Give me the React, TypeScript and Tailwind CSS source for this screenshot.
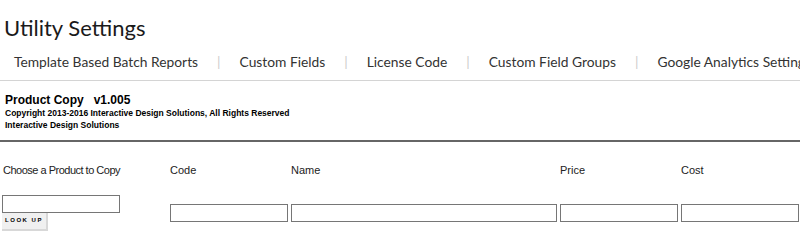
export default function App() {
  const tabs = [
    "Template Based Batch Reports",
    "Custom Fields",
    "License Code",
    "Custom Field Groups",
    "Google Analytics Settings",
  ];

  return (
    <div className="w-[800px] h-[240px] overflow-hidden bg-white text-[#222]">
      <h1 className="px-1 pt-[14px] text-[22px] leading-[28px] font-['Lato',sans-serif] text-[#1a1a1a]">
        Utility Settings
      </h1>

      {/* tabs */}
      <div className="mt-[11px] flex items-center whitespace-nowrap border-b border-[#d4d4d4] pb-[9px] pl-[14px] font-['Lato',sans-serif] text-[13.8px] leading-[18px] text-[#333]">
        {tabs.map((t, i) => (
          <div key={t} className="flex items-center">
            {i > 0 && <span className="mx-[19px] text-[#ccc]">|</span>}
            <span>{t}</span>
          </div>
        ))}
      </div>

      {/* header block */}
      <div className="border-b-2 border-[#666] pb-[9px] pt-[13px] pl-[5px] font-['Liberation_Sans',Arial,sans-serif] font-bold text-black">
        <div className="text-[12px] leading-[13px]">
          Product Copy&nbsp;&nbsp; v1.005
        </div>
        <div className="text-[8.5px] leading-[12px]">
          Copyright 2013-2016 Interactive Design Solutions, All Rights Reserved
        </div>
        <div className="text-[8.5px] leading-[12px]">Interactive Design Solutions</div>
      </div>

      {/* form */}
      <div className="grid grid-cols-[168px_121px_269px_121px_120px] pl-[2px] pt-[20px] font-['Liberation_Sans',Arial,sans-serif] text-[11px] text-[#222]">
        <div className="pl-[1px] tracking-[-0.5px]">Choose a Product to Copy</div>
        <div>Code</div>
        <div>Name</div>
        <div>Price</div>
        <div>Cost</div>

        <div className="mt-[16px] flex flex-col items-start">
          <input className="h-[18px] w-[118px] border border-[#767676]" />
          <button className="mb-[1px] h-[18px] w-[46px] border-r-2 border-b-2 border-[#d8d8d8] bg-[#f0f0f0] text-[6px] font-bold tracking-[1.5px] text-black">
            LOOK UP
          </button>
        </div>
        <div className="mt-[16px] flex items-center">
          <input className="h-[18px] w-[118px] border border-[#767676]" />
        </div>
        <div className="mt-[16px] flex items-center">
          <input className="h-[18px] w-[266px] border border-[#767676]" />
        </div>
        <div className="mt-[16px] flex items-center">
          <input className="h-[18px] w-[118px] border border-[#767676]" />
        </div>
        <div className="mt-[16px] flex items-center">
          <input className="h-[18px] w-[118px] border border-[#767676]" />
        </div>
      </div>
    </div>
  );
}
